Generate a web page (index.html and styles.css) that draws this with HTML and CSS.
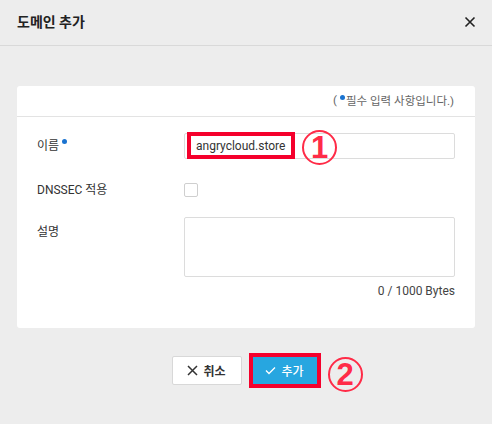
FILE: index.html
```html
<!DOCTYPE html>
<html lang="ko">
<head>
<meta charset="utf-8">
<link rel="stylesheet" href="styles.css">
</head>
<body>
<div class="dialog">
  <div class="dlg-head">
    <h1 class="dlg-title">도메인 추가</h1>
    <svg class="close" width="12" height="12" viewBox="0 0 12 12"><path d="M1.5 1.5 L10.5 10.5 M10.5 1.5 L1.5 10.5" stroke="#222" stroke-width="1.6" fill="none"/></svg>
  </div>
  <div class="dlg-body">
    <div class="card">
      <div class="card-head">(<span class="dot"></span>필수 입력 사항입니다.)</div>
      <div class="form">
        <div class="row r-name">
          <div class="label">이름<span class="dot sup"></span></div>
          <div class="field">
            <div class="input"><span class="mark-box">angrycloud.store</span></div>
            <span class="num num1">1</span>
          </div>
        </div>
        <div class="row r-dns">
          <div class="label">DNSSEC 적용</div>
          <div class="field"><span class="checkbox"></span></div>
        </div>
        <div class="row r-desc">
          <div class="label">설명</div>
          <div class="field col">
            <div class="textarea"></div>
            <div class="counter">0 / 1000 Bytes</div>
          </div>
        </div>
      </div>
    </div>
    <div class="actions">
      <button class="btn cancel"><svg width="11" height="11" viewBox="0 0 11 11"><path d="M1 1 L10 10 M10 1 L1 10" stroke="#333" stroke-width="1.5" fill="none"/></svg>취소</button>
      <div class="ok-wrap">
        <button class="btn ok"><svg width="11" height="9" viewBox="0 0 11 9"><path d="M1 4.5 L4 7.5 L10 1.5" stroke="#fff" stroke-width="1.3" fill="none"/></svg>추가</button>
        <span class="num num2">2</span>
      </div>
    </div>
  </div>
</div>
</body>
</html>
```
FILE: styles.css
```css
* { box-sizing: border-box; }
html, body { margin: 0; padding: 0; }
body {
  background: #ededed;
  font-family: Roboto, "Noto Sans CJK KR", "Noto Sans", sans-serif;
  color: #333;
  width: 492px;
  height: 424px;
  overflow: hidden;
}
.dlg-head {
  height: 46px;
  border-bottom: 1px solid #d9d9d9;
  display: flex;
  align-items: center;
  justify-content: space-between;
  padding: 0 16px 4px 17px;
}
.dlg-title {
  margin: 0;
  font-size: 14px;
  font-weight: 700;
  color: #222;
}
.close { margin-top: 2px; }
.dlg-body { padding: 40px 17px 0; }
.card {
  background: #fff;
  border-radius: 3px;
  padding-bottom: 30px;
}
.card-head {
  height: 31px;
  border-bottom: 1px solid #e3e3e3;
  display: flex;
  align-items: center;
  justify-content: flex-end;
  padding: 0 21px 2px 0;
  font-size: 11.5px;
  color: #666;
}
.dot {
  display: inline-block;
  width: 5px;
  height: 5px;
  border-radius: 50%;
  background: #1a73d0;
  margin: 0 1px 0 3px;
  position: relative;
  top: -3px;
}
.dot.sup { margin-left: 3px; top: -6px; }
.form { padding: 16px 20px 0 20px; }
.row { display: flex; }
.label {
  width: 147px;
  flex: none;
  font-size: 12px;
  color: #333;
  line-height: 26px;
}
.field { flex: 1; display: flex; align-items: center; position: relative; }
.field.col { flex-direction: column; align-items: stretch; }
.r-dns { margin-top: 18px; }
.r-desc { margin-top: 14px; }
.r-desc .label { padding-top: 2px; }
.input {
  height: 26px;
  width: 100%;
  border: 1px solid #dcdcdc;
  border-radius: 2px;
  display: flex;
  align-items: center;
  padding-left: 2px;
}
.mark-box {
  border: 4px solid #f5002c;
  height: 27px;
  margin-top: -1px;
  padding: 0 6px 0 5px;
  font-size: 12px;
  color: #333;
  display: flex;
  align-items: center;
}
.num {
  position: absolute;
  width: 35px;
  height: 35px;
  border: 2px solid #ff2b47;
  border-radius: 50%;
  color: #ff2b47;
  font-family: "Liberation Sans", Arial, sans-serif;
  font-weight: 700;
  font-size: 31px;
  display: flex;
  align-items: center;
  justify-content: center;
}
.num1 { left: 118px; top: -3px; }
.num2 { left: 79px; top: 4px; }
.checkbox {
  width: 14px;
  height: 14px;
  border: 1px solid #cfcfcf;
  border-radius: 2px;
  margin-top: 0px;
}
.textarea {
  height: 60px;
  border: 1px solid #dcdcdc;
  border-radius: 2px;
}
.counter {
  text-align: right;
  font-size: 12px;
  color: #444;
  margin-top: 7px;
  line-height: 14px;
}
.actions {
  display: flex;
  justify-content: center;
  align-items: center;
  gap: 7px;
  margin-top: 25px;
}
.btn {
  font-family: Roboto, "Noto Sans CJK KR", sans-serif;
  display: flex;
  align-items: center;
  justify-content: center;
  gap: 5px;
  font-size: 12px;
  font-weight: 700;
  cursor: pointer;
}
.cancel {
  width: 70px;
  height: 29px;
  background: #fff;
  border: 1px solid #d8d8d8;
  border-radius: 2px;
  color: #333;
}
.ok-wrap { position: relative; }
.ok {
  width: 72px;
  height: 35px;
  background: #27a6e0;
  border: 4px solid #f5002c;
  color: #fff;
  font-weight: 500;
  padding: 0;
}
```
